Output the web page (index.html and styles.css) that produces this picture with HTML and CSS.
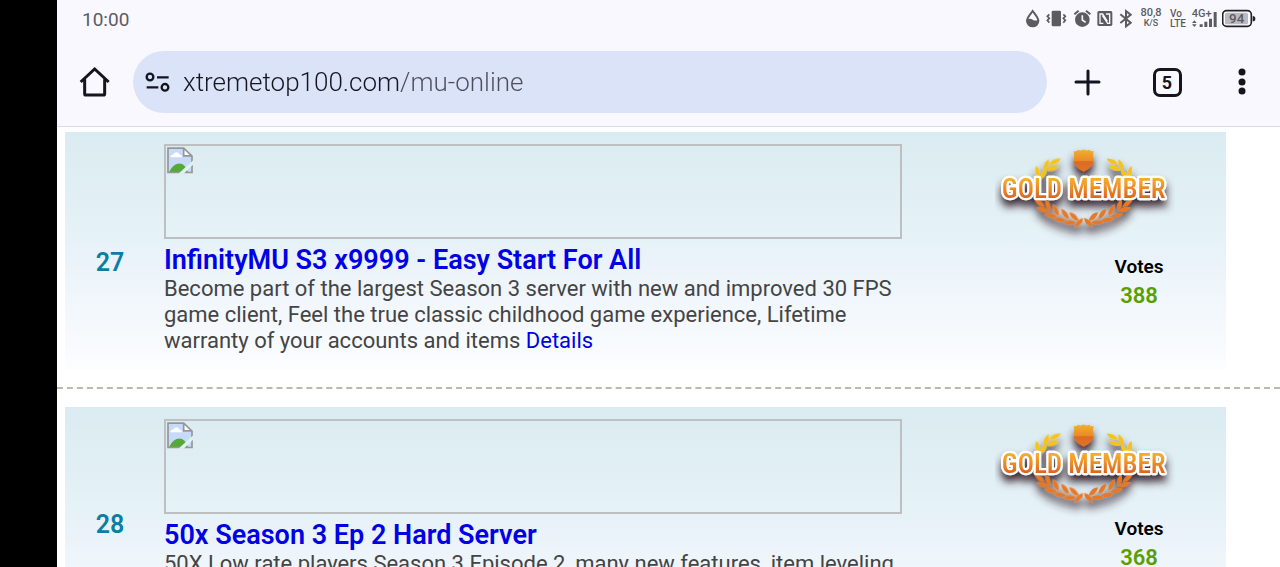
FILE: index.html
```html
<!DOCTYPE html>
<html lang="en">
<head>
    <meta charset="utf-8">
    <meta name="viewport" content="width=device-width, initial-scale=1">
    <title>Mu Online - xtremetop100.com</title>
    <link rel="stylesheet" href="styles.css">
</head>
<body>
    <!-- shared drawings -->
    <svg class="defs" width="0" height="0" aria-hidden="true">
        <defs>
            <linearGradient id="gold" gradientUnits="userSpaceOnUse" x1="0" y1="100" x2="0" y2="185">
                <stop offset="0" stop-color="#f9bf22"/>
                <stop offset="0.4" stop-color="#f09a2a"/>
                <stop offset="1" stop-color="#d9541a"/>
            </linearGradient>
            <linearGradient id="shield" x1="0" y1="0" x2="0" y2="1">
                <stop offset="0" stop-color="#f2b02c"/>
                <stop offset="0.5" stop-color="#e88c2a"/>
                <stop offset="0.55" stop-color="#dc6c22"/>
                <stop offset="1" stop-color="#e2702a"/>
            </linearGradient>
            <filter id="shadow" x="-20%" y="-20%" width="140%" height="160%">
                <feDropShadow dx="0" dy="20" stdDeviation="13" flood-color="#3a2830" flood-opacity="1"/>
            </filter>
            <path id="leaf" d="M-20 0 Q-5 -15 19 -3 Q6 12 -20 0z"/>
            <g id="branch">
                <g fill="#f5c31c">
                    <use href="#leaf" transform="translate(226 66) rotate(-25)"/>
                    <use href="#leaf" transform="translate(200 76) rotate(-65)"/>
                    <use href="#leaf" transform="translate(218 86) rotate(-15)"/>
                    <use href="#leaf" transform="translate(174 96) rotate(-100)"/>
                    <use href="#leaf" transform="translate(190 104) rotate(-55)"/>
                </g>
                <g fill="#e37a2c">
                    <use href="#leaf" transform="translate(178 190) rotate(40)"/>
                    <use href="#leaf" transform="translate(188 210) rotate(20)"/>
                    <use href="#leaf" transform="translate(202 196) rotate(75)"/>
                    <use href="#leaf" transform="translate(212 228) rotate(15)"/>
                    <use href="#leaf" transform="translate(226 211) rotate(65)"/>
                    <use href="#leaf" transform="translate(240 241) rotate(10)"/>
                    <use href="#leaf" transform="translate(254 223) rotate(55)"/>
                    <use href="#leaf" transform="translate(270 249) rotate(0)"/>
                    <use href="#leaf" transform="translate(281 231) rotate(45)"/>
                    <use href="#leaf" transform="translate(298 249) rotate(-45)"/>
                </g>
            </g>
            <symbol id="gold-member" viewBox="45 15 540 291">
                <g filter="url(#shadow)">
                    <use href="#branch"/>
                    <use href="#branch" transform="translate(622 0) scale(-1 1)"/>
                    <path d="M281 33 Q289 35 294 29 Q303 34 311 28 Q319 34 328 29 Q333 35 341 33 Q338 44 341 57 Q343 82 311 95 Q279 82 281 57 Q284 44 281 33z" fill="url(#shield)"/>
                    <text class="gold-text" x="311" y="174" text-anchor="middle">GOLD MEMBER</text>
                </g>
            </symbol>
            <symbol id="broken-image" viewBox="350 80 78 80">
                <path d="M352 83h48l26 25v49H352z" fill="#c8dafa"/>
                <path d="M360 110q0-8 8-7 2-8 10-8 7 0 9 7 8 0 8 8z" fill="#fff"/>
                <path d="M356 155q12-26 32-26 16 0 25 26z" fill="#55a936"/>
                <path d="M400 83v23h25z" fill="#fff"/>
                <path d="M353 83h47l25 24v49H353zM400 83v23h25" fill="none" stroke="#969696" stroke-width="5"/>
                <path d="M384 160l44-40v13l-28 27z" fill="#e1f0f3"/>
            </symbol>
        </defs>
    </svg>

    <header class="browser">
        <div class="status-bar">
            <span class="clock">10:00</span>
            <div class="status-icons">
                <svg width="14" height="20" viewBox="48 24 42 60">
                    <path d="M68 33C60 44 51 53 51 62a17 17 0 0 0 34 0C85 53 76 44 68 33z" fill="none" stroke="#5c5c60" stroke-width="6"/>
                    <path d="M51 59q9-5 17 0t17 0v4a17 17 0 0 1-34 0z" fill="#5c5c60"/>
                </svg>
                <svg width="24" height="20" viewBox="105 24 72 60">
                    <rect x="125" y="32" width="28" height="47" rx="4" fill="#5c5c60"/>
                    <path d="M118 43l-6 6 6 6-6 6 6 7M160 43l6 6-6 6 6 6-6 7" fill="none" stroke="#5c5c60" stroke-width="5"/>
                </svg>
                <svg width="18" height="20" viewBox="192 24 54 60">
                    <circle cx="217" cy="59" r="22" fill="#5c5c60"/>
                    <path d="M193 43l13-11M228 32l13 11" stroke="#5c5c60" stroke-width="6"/>
                    <path d="M217 46v14l10 7" fill="none" stroke="#f9f8ff" stroke-width="5"/>
                </svg>
                <svg width="16" height="20" viewBox="261 24 48 60">
                    <rect x="262" y="33" width="45" height="45" rx="5" fill="#5c5c60"/>
                    <path d="M280 70h-10V42h8l14 22M288 42h11v28h-6L277 46" fill="none" stroke="#f9f8ff" stroke-width="4"/>
                </svg>
                <svg width="14" height="20" viewBox="324 24 42 60">
                    <path d="M331 43l31 25-14 11V33l14 11-31 25" fill="none" stroke="#5c5c60" stroke-width="6"/>
                </svg>
                <span class="tiny speed">80,8<small>K/S</small></span>
                <span class="tiny volte">Vo<br>LTE</span>
                <svg width="26" height="20" viewBox="543 24 78 60">
                    <text class="net-text" x="545" y="52">4G+</text>
                    <path d="M569 73h9v8h-9zM583 65h9v16h-9zM597 56h9v25h-9zM611 36h9v45h-9zM546 69l7-8 7 8zM546 73l7 8 7-8z" fill="#5c5c60"/>
                </svg>
                <svg width="34" height="20" viewBox="636 24 102 60">
                    <rect x="638" y="32" width="86" height="47" rx="12" fill="none" stroke="#222226" stroke-width="5"/>
                    <rect x="645" y="38" width="69" height="35" rx="5" fill="#bbbac0"/>
                    <path d="M728 48q8 0 8 8t-8 8z" fill="#222226"/>
                    <text class="battery-text" x="680" y="70" text-anchor="middle">94</text>
                </svg>
            </div>
        </div>

        <div class="toolbar">
            <button class="tool home" aria-label="Home">
                <svg width="31" height="32" viewBox="87 198 93 96">
                    <path d="M92 246l42-39 42 39M104 238v43q0 4 4 4h52q4 0 4-4v-43" fill="none" stroke="#14151f" stroke-width="9"/>
                </svg>
            </button>
            <div class="address">
                <button class="site-info" aria-label="Site information">
                    <svg width="26" height="22" viewBox="285 211 78 66">
                        <g fill="none" stroke="#14151f" stroke-width="7">
                            <circle cx="300" cy="229" r="10"/>
                            <circle cx="345" cy="260" r="10"/>
                            <path d="M321 230h35M290 260h35"/>
                        </g>
                    </svg>
                </button>
                <input class="url" type="text" value="xtremetop100.com/mu-online" aria-label="Address">
            </div>
            <button class="tool" aria-label="New tab">
                <svg width="27" height="27" viewBox="0 0 27 27">
                    <path d="M14 2v23M2 13h23" stroke="#14151f" stroke-width="3" stroke-linecap="round"/>
                </svg>
            </button>
            <button class="tool" aria-label="Switch tabs">
                <span class="tab-count">5</span>
            </button>
            <button class="tool menu" aria-label="Menu">
                <svg width="8" height="28" viewBox="0 0 8 28">
                    <g fill="#14151f">
                        <circle cx="4" cy="4" r="3.5"/>
                        <circle cx="4" cy="14" r="3.5"/>
                        <circle cx="4" cy="23" r="3.5"/>
                    </g>
                </svg>
            </button>
        </div>
    </header>

    <main class="list">
        <article class="site">
            <div class="rank">27</div>
            <div class="info">
                <div class="banner">
                    <svg width="26" height="27"><use href="#broken-image"/></svg>
                </div>
                <h2><a href="#infinitymu">InfinityMU S3 x9999 - Easy Start For All</a></h2>
                <p>Become part of the largest Season 3 server with new and improved 30 FPS game client, Feel the true classic childhood game experience, Lifetime warranty of your accounts and items <a href="#details-27">Details</a></p>
            </div>
            <div class="votes">
                <strong>Votes</strong>
                <span class="count">388</span>
            </div>
            <svg class="badge" width="180" height="97"><use href="#gold-member"/></svg>
        </article>

        <hr>

        <article class="site">
            <div class="rank">28</div>
            <div class="info">
                <div class="banner">
                    <svg width="26" height="27"><use href="#broken-image"/></svg>
                </div>
                <h2><a href="#50x-season-3">50x Season 3 Ep 2 Hard Server</a></h2>
                <p>50X Low rate players Season 3 Episode 2, many new features, item leveling <a href="#details-28">Details</a></p>
            </div>
            <div class="votes">
                <strong>Votes</strong>
                <span class="count">368</span>
            </div>
            <svg class="badge" width="180" height="97"><use href="#gold-member"/></svg>
        </article>
    </main>
</body>
</html>
```
FILE: styles.css
```css
* { box-sizing: border-box; }
html { background: #000; }
body { margin: 0 0 0 57px; height: 100vh; overflow: hidden; background: #fff; font-family: Roboto, Arial, sans-serif; color: #444; }
button { padding: 0; border: 0; background: none; color: inherit; font: inherit; }
a { color: #0000e6; text-decoration: none; }
svg { display: block; }
.defs { position: absolute; }

/* browser chrome */
.browser { background: #f9f8ff; border-bottom: 1px solid #dcdce6; }
.status-bar { display: flex; justify-content: space-between; padding: 8px 24px 0 25px; color: #5c5c60; }
.clock { font-size: 19px; line-height: 24px; }
.status-icons { display: flex; gap: 5px; height: 20px; }
.tiny { font-size: 11px; line-height: 10px; font-weight: 500; }
.tiny small { display: block; font-size: 9px; }
.speed { width: 28px; text-align: center; }
.volte { width: 16px; padding-top: 1px; font-size: 10px; }
.net-text { font-size: 33px; font-weight: 500; fill: #5c5c60; }
.battery-text { font-size: 40px; font-weight: 500; fill: #5c5c60; }

.toolbar { display: flex; align-items: center; padding: 19px 3px 13px 0; }
.tool { display: flex; flex: none; align-items: center; justify-content: center; width: 80px; height: 62px; color: #14151f; }
.home { width: 75px; margin-right: 1px; }
.menu { width: 70px; }
.address { display: flex; flex: 1; align-items: center; height: 62px; padding: 0 24px 0 12px; border-radius: 31px; background: #dbe3f9; }
.url { flex: 1; min-width: 0; margin-left: 12px; padding: 0; border: 0; outline: 0; font-family: Roboto, sans-serif; font-size: 26px; line-height: 32px; font-weight: 350; background: linear-gradient(90deg, #14151f 217px, #4b4f5d 217px); -webkit-background-clip: text; background-clip: text; color: transparent; }
.tab-count { width: 29px; height: 29px; border: 3px solid #14151f; border-radius: 7px; font-size: 18px; line-height: 23px; font-weight: 700; text-align: center; }

/* ranking */
.list { padding: 5px 0; }
.site { position: relative; display: grid; grid-template-columns: 90px 1fr 174px; margin: 0 54px 0 8px; padding: 12px 0 16px; background: linear-gradient(#daebf1, #e5f2f6 100px, #e9f2f9 120px, #fcfdff 239px); }
.rank { align-self: center; padding-top: 28px; font-size: 25px; line-height: 30px; font-weight: 600; color: #0a7ea4; text-align: center; }
.info { padding: 0 150px 0 9px; }
.banner { height: 95px; padding: 1px; border: 2px solid #bebfc1; }
.info h2 { margin: 5px 0 0; font-size: 27px; line-height: 32px; font-weight: 600; }
.info p { margin: 0; font-size: 22px; line-height: 26px; }
.votes { display: flex; flex-direction: column; align-self: center; padding-top: 65px; text-align: center; }
.votes strong { font-size: 19px; line-height: 28px; font-weight: 600; color: #000; }
.count { font-size: 22px; line-height: 30px; font-weight: 600; color: #58a000; }
.badge { position: absolute; top: 13px; right: 51px; }
.gold-text { font-family: "Roboto Condensed", "Liberation Sans Narrow", "Liberation Sans", sans-serif; font-size: 81px; font-weight: 500; fill: url(#gold); stroke: #fff; stroke-width: 13px; stroke-linejoin: round; paint-order: stroke; }
hr { margin: 17px 0 18px; border: 0; border-top: 2px dashed #bcb9a8; }
```
